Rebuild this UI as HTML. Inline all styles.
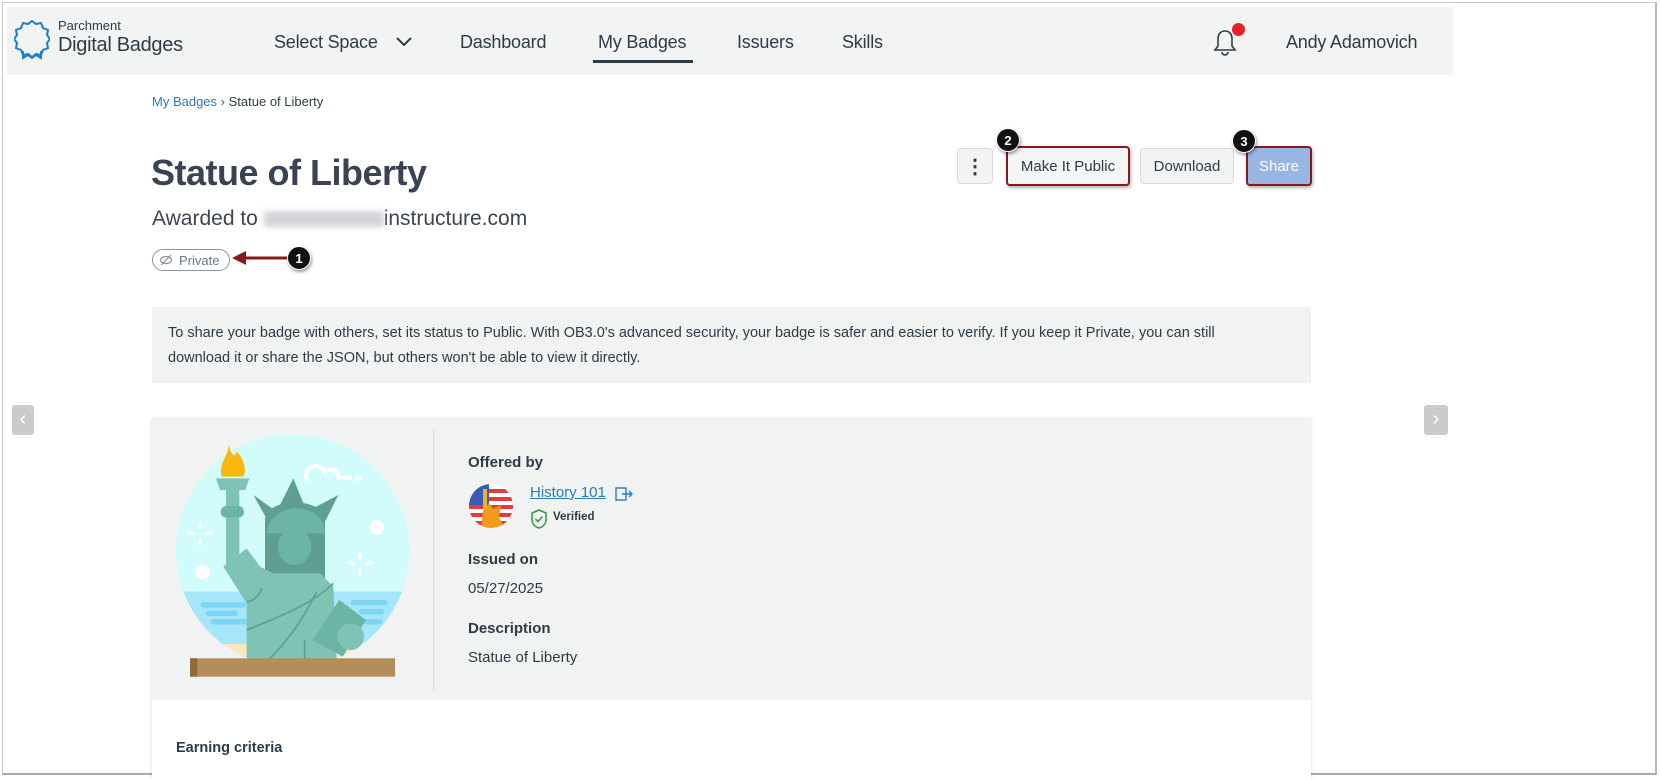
<!DOCTYPE html>
<html><head><meta charset="utf-8"><style>
*{margin:0;padding:0;box-sizing:border-box}
body{width:1660px;height:778px;background:#fff;font-family:"Liberation Sans",sans-serif;color:#2d3b45;position:relative;overflow:hidden}
.frame{position:absolute;left:2px;top:2px;width:1655px;height:773px;border:1px solid #c8c8c8;border-right:2px solid #bbb;border-bottom:2px solid #aaa}
.abs{position:absolute;white-space:nowrap}
.nav{position:absolute;left:7px;top:7px;width:1446px;height:68px;background:#f2f3f3}
.nv{position:absolute;top:32px;font-size:18px;color:#2d3b45;letter-spacing:-0.2px}
.btn{position:absolute;background:#f2f3f3;border:1px solid #d7dadd;border-radius:4px;font-size:15px;color:#2d3b45;display:flex;align-items:center;justify-content:center}
.badge{position:absolute;width:24px;height:24px;border-radius:50%;background:#111;color:#fff;font-size:13px;font-weight:bold;display:flex;align-items:center;justify-content:center;box-shadow:1px 2px 3px rgba(0,0,0,.4);border:1px solid #fff}
.lbl{font-size:15px;font-weight:bold;color:#2d3b45}
.val{font-size:15px;color:#2d3b45}
</style></head><body>
<div class="frame"></div>
<div class="nav"></div>
<svg class="abs" style="left:14px;top:18px" width="36" height="42" viewBox="0 0 36 42"><path d="M18 3 l4 3 5-1 2 5 5 2-1 5 3 4-3 4 1 5-5 2-2 5-5-1-4 3-4-3-5 1-2-5-5-2 1-5-3-4 3-4-1-5 5-2 2-5 5 1z" fill="none" stroke="#1f7ec9" stroke-width="2"/><path d="M9 33 v7 l5-3 4 3 4-3 5 3v-7" fill="none" stroke="#1f7ec9" stroke-width="2"/></svg>
<div class="abs" style="left:58px;top:18px;font-size:13px;color:#2d3b45">Parchment</div>
<div class="abs" style="left:58px;top:34px;font-size:20px;color:#2d3b45;letter-spacing:-0.3px">Digital Badges</div>
<div class="nv abs" style="left:274px">Select Space</div>
<svg class="abs" style="left:396px;top:36px" width="16" height="12"><path d="M1 2 l7 7 7-7" fill="none" stroke="#2d3b45" stroke-width="2"/></svg>
<div class="nv abs" style="left:460px">Dashboard</div>
<div class="nv abs" style="left:598px">My Badges</div>
<div class="abs" style="left:593px;top:60px;width:100px;height:3px;background:#2d3b45"></div>
<div class="nv abs" style="left:737px">Issuers</div>
<div class="nv abs" style="left:842px">Skills</div>
<svg class="abs" style="left:1212px;top:28px" width="26" height="30"><path d="M13 3 c-5 0-7 4-7 8 v7 l-3 4 h20 l-3-4 v-7 c0-4-2-8-7-8z M10 24 a3 3 0 0 0 6 0" fill="none" stroke="#2d3b45" stroke-width="1.6"/></svg>
<div class="abs" style="left:1232px;top:23px;width:13px;height:13px;border-radius:50%;background:#e8202a"></div>
<div class="nv abs" style="left:1286px">Andy Adamovich</div>

<div class="abs" style="left:152px;top:94px;font-size:13px"><span style="color:#2b7abc">My Badges</span> <span style="color:#555">›</span> Statue of Liberty</div>
<div class="abs" style="left:151px;top:152px;font-size:36px;font-weight:bold;color:#3a4254;letter-spacing:-0.5px">Statue of Liberty</div>
<div class="abs" style="left:152px;top:207px;font-size:21px;color:#3d4550">Awarded to <span style="display:inline-block;width:120px;height:16px;background:#d4d4d8;filter:blur(3px);vertical-align:middle"></span>instructure.com</div>
<div class="abs" style="left:152px;top:249px;width:78px;height:22px;border:1px solid #8b949e;border-radius:11px;font-size:13px;color:#6b7780;padding:3px 0 0 26px">Private</div>
<svg class="abs" style="left:159px;top:253px" width="14" height="14"><ellipse cx="7" cy="7" rx="5.5" ry="3.5" fill="none" stroke="#8b949e" stroke-width="1.2"/><path d="M2 12 L12 2" stroke="#8b949e" stroke-width="1.2"/></svg>
<svg class="abs" style="left:232px;top:250px" width="60" height="16"><path d="M4 8 H58" stroke="#8a1a1a" stroke-width="3"/><path d="M0 8 L14 1 L14 15z" fill="#8a1a1a"/></svg>
<div class="badge" style="left:287px;top:246px">1</div>

<div class="btn" style="left:957px;top:148px;width:36px;height:36px;font-size:20px;font-weight:bold">⋮</div>
<div class="btn" style="left:1006px;top:146px;width:124px;height:40px;border:2px solid #8a1a1a;background:#f4f5f5;box-shadow:1px 2px 3px rgba(0,0,0,.3)">Make It Public</div>
<div class="btn" style="left:1140px;top:148px;width:94px;height:36px">Download</div>
<div class="btn" style="left:1246px;top:146px;width:66px;height:40px;background:#98b6e4;color:#fff;border:2px solid #8a1a1a;box-shadow:1px 2px 3px rgba(0,0,0,.3)">Share</div>
<div class="badge" style="left:996px;top:128px">2</div>
<div class="badge" style="left:1232px;top:129px">3</div>

<div class="abs" style="left:152px;top:307px;width:1159px;height:76px;background:#f1f2f2;font-size:14.5px;color:#2d3b45;padding:14px 16px;line-height:25px">To share your badge with others, set its status to Public. With OB3.0's advanced security, your badge is safer and easier to verify. If you keep it Private, you can still<br>download it or share the JSON, but others won't be able to view it directly.</div>

<div class="abs" style="left:12px;top:405px;width:22px;height:30px;background:#c9cbcd;border-radius:3px;color:#fff;font-size:20px;text-align:center;line-height:28px">‹</div>
<div class="abs" style="left:1424px;top:405px;width:24px;height:30px;background:#c9cbcd;border-radius:3px;color:#fff;font-size:20px;text-align:center;line-height:28px">›</div>

<div class="abs" style="left:152px;top:419px;width:1159px;height:360px;background:#fff;box-shadow:0 0 4px rgba(0,0,0,.15)"></div>
<div class="abs" style="left:152px;top:419px;width:1159px;height:281px;background:#f1f2f2"></div>
<div class="abs" style="left:433px;top:429px;width:1px;height:262px;background:#d8dbdd"></div>
<svg class="abs" style="left:140px;top:420px" width="300" height="280" viewBox="0 0 900 840">
<defs><clipPath id="c"><circle cx="458" cy="392" r="350"/></clipPath></defs>
<g clip-path="url(#c)">
<rect x="0" y="0" width="900" height="840" fill="#d2fbfc"/>
<rect x="0" y="515" width="900" height="160" fill="#a5e6fb"/>
<rect x="0" y="672" width="900" height="100" fill="#fbe6c0"/>
<path d="M190 555 h120 M205 580 h80 M220 605 h100 M640 548 h95 M665 575 h60 M650 605 h70" stroke="#7dd4f5" stroke-width="16" stroke-linecap="round"/>
</g>
<circle cx="710" cy="322" r="22" fill="#fff"/><circle cx="188" cy="457" r="22" fill="#fff"/>
<path d="M500 178 a28 28 0 0 1 55 -20 a22 22 0 0 1 40 15 h35 M650 176 h10" fill="none" stroke="#fff" stroke-width="12" stroke-linecap="round"/>
<path d="M181 310 v12 M181 360 v12 M148 340 h12 M200 340 h12 M660 400 v12 M660 450 v12 M628 430 h12 M680 430 h12" stroke="#fff" stroke-width="10" stroke-linecap="round"/>
<path d="M245 170 c-10-40 20-60 20-95 c10 30 20 40 25 20 c25 25 30 60 20 75z" fill="#f8b812"/>
<path d="M228 175 h100 l-12 35 h-76z" fill="#7fc3b5"/>
<rect x="258" y="210" width="40" height="230" fill="#7fc3b5"/>
<rect x="242" y="258" width="70" height="35" rx="17" fill="#6cb5a5"/>
<path d="M340 225 l70 50 l50-100 l40 100 l95-50 l-40 80 l-170 0z" fill="#5e9f91"/>
<path d="M375 300 c0-70 180-70 180 0 v180 h-180z" fill="#5e9f91"/>
<path d="M380 340 c10-100 170-100 175 0 z" fill="#6cb5a5"/>
<ellipse cx="464" cy="380" rx="50" ry="55" fill="#6cb5a5"/>
<path d="M250 440 l70-55 l40 55 l40 20 l140 0 l40 40 l10 220 h-270 v-170 z" fill="#7fc3b5"/>
<path d="M320 630 c100-40 200-80 260-140 M390 715 c60-60 100-120 140-200 M494 660 v55 M320 545 c20 0 40-20 45-40" fill="none" stroke="#5e9f91" stroke-width="5"/>
<path d="M518 660 l80-120 l80 60 l-70 110z" fill="#6cb5a5"/>
<circle cx="632" cy="650" r="40" fill="#7fc3b5"/>
<rect x="150" y="715" width="615" height="55" fill="#b38e5a"/>
<rect x="150" y="715" width="22" height="55" fill="#8e6c3e"/>
</svg>

<div class="abs lbl" style="left:468px;top:454px">Offered by</div>
<svg class="abs" style="left:469px;top:483px" width="45" height="46"><defs><clipPath id="a"><circle cx="22" cy="23" r="22"/></clipPath></defs><g clip-path="url(#a)"><rect width="45" height="46" fill="#fff"/><path d="M0 8h45M0 16h45M0 24h45M0 32h45M0 40h45" stroke="#e23b3b" stroke-width="4"/><rect width="20" height="22" fill="#3a5bb8"/><path d="M12 46 l2-18 l6-8 l4 6 l8-4 l-2 12 l6 12z" fill="#f29a1d"/><rect x="14" y="6" width="4" height="20" fill="#f0b41c"/></g></svg>
<div class="abs" style="left:530px;top:484px;font-size:15px;color:#2b7abc;text-decoration:underline">History 101</div>
<svg class="abs" style="left:615px;top:486px" width="18" height="16"><rect x="1" y="2" width="10" height="12" fill="none" stroke="#2b7abc" stroke-width="1.4"/><path d="M7 8h10M14 5l3 3-3 3" fill="none" stroke="#2b7abc" stroke-width="1.4"/></svg>
<svg class="abs" style="left:530px;top:509px" width="18" height="20"><path d="M9 1 l7 3 v6 c0 5-3 8-7 9 c-4-1-7-4-7-9 v-6z" fill="none" stroke="#2e9a47" stroke-width="1.5"/><path d="M5.5 10 l2.5 2.5 l4.5-5" fill="none" stroke="#2e9a47" stroke-width="1.5"/></svg>
<div class="abs" style="left:553px;top:511px;font-size:11.5px;font-weight:bold;color:#2d3b45">Verified</div>
<div class="abs lbl" style="left:468px;top:551px">Issued on</div>
<div class="abs val" style="left:468px;top:580px">05/27/2025</div>
<div class="abs lbl" style="left:468px;top:620px">Description</div>
<div class="abs val" style="left:468px;top:649px">Statue of Liberty</div>
<div class="abs" style="left:176px;top:740px;font-size:14.5px;font-weight:bold;color:#2d3b45">Earning criteria</div>
</body></html>
